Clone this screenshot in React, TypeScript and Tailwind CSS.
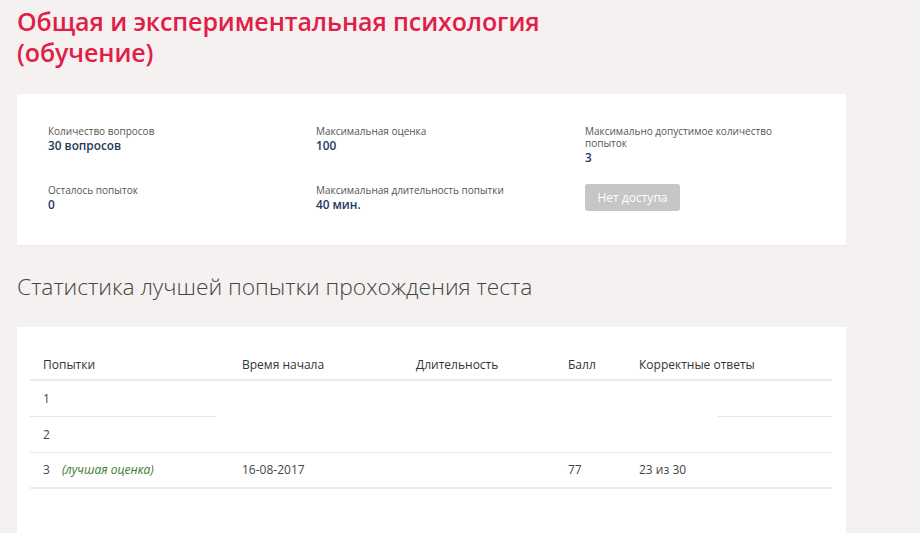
import React from "react";

const font = { fontFamily: '"Open Sans", "Noto Sans", sans-serif' };

function Info({ label, value, narrow }: { label: string; value: string; narrow?: boolean }) {
  return (
    <div className={narrow ? "max-w-[215px]" : ""}>
      <div className="text-[10px] leading-[12px] text-[#555]">{label}</div>
      <div className="mt-[1px] text-[11.8px] leading-[15px] font-semibold text-[#23395b]">{value}</div>
    </div>
  );
}

export default function App() {
  const rowBorder = "border-b border-[#e6e6e6]";
  const head = "h-[34px] flex items-center pt-[4px] border-b-2 border-[#ececec] text-[#333]";
  return (
    <div className="min-h-[533px] w-[920px] bg-[#f4f1f0] overflow-hidden" style={font}>
      <div className="w-[829px] ml-[17px]">
        <h1 className="pt-[6px] text-[25px] leading-[31px] font-semibold text-[#e11d48] tracking-[-0.1px]">
          Общая и экспериментальная психология
          <br />
          (обучение)
        </h1>

        <div className="mt-[26px] h-[151px] bg-white pl-[31px] pt-[31px] shadow-[0_1px_1px_rgba(0,0,0,0.04)]">
          <div className="grid grid-cols-[268px_269px_1fr] gap-y-[19px]">
            <Info label="Количество вопросов" value="30 вопросов" />
            <Info label="Максимальная оценка" value="100" />
            <Info label="Максимально допустимое количество попыток" value="3" narrow />
            <Info label="Осталось попыток" value="0" />
            <Info label="Максимальная длительность попытки" value="40 мин." />
            <div>
              <div className="w-[95px] h-[27px] rounded-[3px] bg-[#c6c6c6] text-white text-[12px] flex items-center justify-center">
                Нет доступа
              </div>
            </div>
          </div>
        </div>

        <h2 className="mt-[27px] text-[22.8px] leading-[30px] font-light text-[#444]">
          Статистика лучшей попытки прохождения теста
        </h2>

        <div className="mt-[25px] h-[220px] bg-white pl-[13px] pr-[14px] pt-[20px]">
          <div className="grid grid-cols-[186px_187px_152px_71px_92px_114px] text-[12px] text-[#444]">
            <div className={`${head} pl-[13px]`}>Попытки</div>
            <div className={`${head} pl-[26px]`}>Время начала</div>
            <div className={`${head} pl-[13px]`}>Длительность</div>
            <div className={`${head} pl-[13px]`}>Балл</div>
            <div className={`${head} pl-[13px] whitespace-nowrap`}>Корректные ответы</div>
            <div className="h-[34px] border-b-2 border-[#ececec]"></div>

            <div className={`h-[36px] flex items-center pl-[13px] ${rowBorder}`}>1</div>
            <div className="h-[36px]"></div>
            <div className="h-[36px]"></div>
            <div className="h-[36px]"></div>
            <div className="h-[36px]"></div>
            <div className={`h-[36px] ${rowBorder}`}></div>

            <div className={`h-[36px] flex items-center pl-[13px] ${rowBorder}`}>2</div>
            <div className={`h-[36px] ${rowBorder}`}></div>
            <div className={`h-[36px] ${rowBorder}`}></div>
            <div className={`h-[36px] ${rowBorder}`}></div>
            <div className={`h-[36px] ${rowBorder}`}></div>
            <div className={`h-[36px] ${rowBorder}`}></div>

            <div className="h-[36px] flex items-center pl-[13px] border-b-2 border-[#ececec]">
              3
              <span className="ml-[12px] italic text-[12px] text-[#3c7a2e]">(лучшая оценка)</span>
            </div>
            <div className="h-[36px] flex items-center pl-[26px] border-b-2 border-[#ececec]">16-08-2017</div>
            <div className="h-[36px] border-b-2 border-[#ececec]"></div>
            <div className="h-[36px] flex items-center pl-[13px] border-b-2 border-[#ececec]">77</div>
            <div className="h-[36px] flex items-center pl-[13px] border-b-2 border-[#ececec] whitespace-nowrap">23 из 30</div>
            <div className="h-[36px] border-b-2 border-[#ececec]"></div>
          </div>
        </div>
      </div>
    </div>
  );
}
